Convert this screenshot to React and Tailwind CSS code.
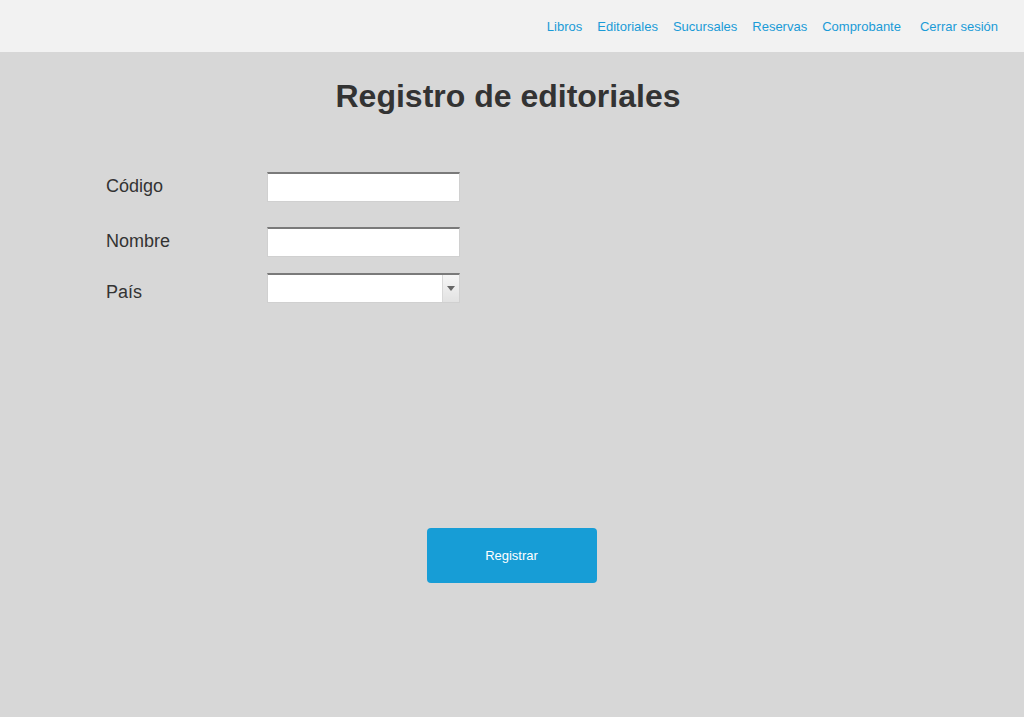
import React from "react";

const links = ["Libros", "Editoriales", "Sucursales", "Reservas", "Comprobante"];

function Field({ label, children, className, labelClass = "" }) {
    return (
        <div className={`flex ${className}`}>
            <label className={`w-[161px] text-[18px] text-[#333333] ${labelClass}`}>{label}</label>
            {children}
        </div>
    );
}

export default function App() {
    return (
        <div className="min-h-[717px] bg-[#d7d7d7] font-['Liberation_Sans',Arial,sans-serif]">
            <nav className="h-[52px] bg-[#f2f2f2] flex items-center justify-end pr-[26px] gap-[15px] text-[13px] text-[#1a9bd7]">
                {links.map((l) => (
                    <a key={l} href="#" className="leading-none">{l}</a>
                ))}
                <a href="#" className="leading-none ml-[4px]">Cerrar sesión</a>
            </nav>
            <h1 className="text-center text-[32px] font-bold text-[#333333] mt-[28px] leading-none ml-[-8px]">
                Registro de editoriales
            </h1>
            <form className="pl-[106px] mt-[60px]" onSubmit={(e) => e.preventDefault()}>
                <Field label="Código" className="items-center" labelClass="mt-[-1px]">
                    <input className="w-[193px] h-[30px] bg-white border border-[#d0d0d0] border-t-[#7a7a7a] border-t-2 outline-none" />
                </Field>
                <Field label="Nombre" className="mt-[25px] items-center" labelClass="mt-[-1px]">
                    <input className="w-[193px] h-[30px] bg-white border border-[#d0d0d0] border-t-[#7a7a7a] border-t-2 outline-none" />
                </Field>
                <Field label="País" className="mt-[16px] items-start" labelClass="pt-[6px]">
                    <div className="relative w-[193px] h-[30px] bg-white border border-[#d0d0d0] border-t-[#7a7a7a] border-t-2">
                        <div className="absolute right-0 top-0 bottom-0 w-[17px] bg-gradient-to-b from-[#f6f6f6] to-[#e2e2e2] border-l border-[#d8d8d8] flex items-center justify-center">
                            <span className="block w-0 h-0 border-l-[4px] border-r-[4px] border-t-[5px] border-l-transparent border-r-transparent border-t-[#666666]" />
                        </div>
                    </div>
                </Field>
                <div className="flex justify-center mt-[222px] pr-[106px]">
                    <button type="submit" className="ml-[-1px] w-[170px] h-[55px] bg-[#179dd6] rounded-[4px] text-white text-[13px]">
                        Registrar
                    </button>
                </div>
            </form>
        </div>
    );
}
